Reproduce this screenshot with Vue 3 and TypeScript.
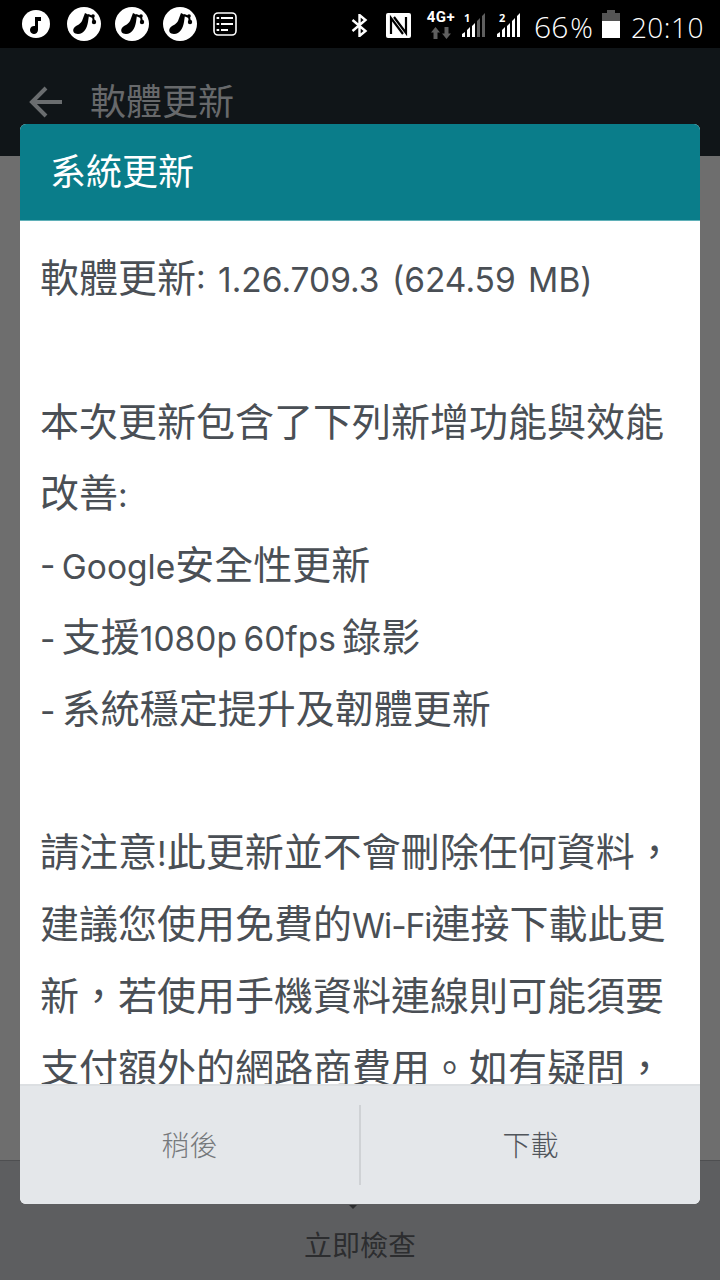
<template>
  <div class="screen">
    <div class="status-bar">
      <div class="notif-icons">
        <svg class="ic-music" width="28" height="28" viewBox="0 0 28 28">
          <circle cx="14" cy="14" r="14" fill="#fff" />
          <path d="M13 7h6v4h-3v9a4 4 0 1 1-3-3.9z" fill="#000" />
        </svg>
        <svg v-for="n in 3" :key="n" class="ic-app" width="34" height="34" viewBox="0 0 34 34">
          <circle cx="17" cy="17" r="17" fill="#fff" />
          <path d="M18 6l4 2-1 7c-1 6-4 12-10 12-4 0-6-3-4-6 2-3 6-3 8-7z" fill="#000" />
          <path d="M21 8l5 2 1 5" fill="none" stroke="#000" stroke-width="2" />
          <circle cx="26" cy="9" r="1.8" fill="#000" />
          <circle cx="27" cy="15" r="2.2" fill="#000" />
        </svg>
        <svg class="ic-list" width="24" height="24" viewBox="0 0 24 24">
          <rect x="1" y="1" width="22" height="22" rx="4" fill="none" stroke="#fff" stroke-width="1.6" />
          <path d="M3.6 6h2.6M8 6h12M3.6 12h2.6M8 12h12M3.6 18h2.6M8 18h7" stroke="#fff" stroke-width="2.2" />
        </svg>
      </div>
      <div class="sys-icons">
        <svg class="ic-bt" width="17" height="23" viewBox="0 0 17 23">
          <path d="M1.5 6l13 11-6 5V1l6 5-13 11" fill="none" stroke="#fff" stroke-width="2.4" />
        </svg>
        <svg class="ic-nfc" width="25" height="25" viewBox="0 0 25 25">
          <path d="M2 0h21a2 2 0 0 1 2 2v21a2 2 0 0 1-2 2H2a2 2 0 0 1-2-2V2a2 2 0 0 1 2-2z" fill="#fff" />
          <path d="M5 21V5l12 16M20 4v16L8 4" fill="none" stroke="#000" stroke-width="2.2" />
        </svg>
        <div class="net">
          <span class="net-label">4G+</span>
          <svg width="20" height="12" viewBox="0 0 20 12">
            <path d="M4.5 0l4.500 5.500H6.500V12h-4V5.500H0zM15.500 12L11 6.500h2.500V0h4v6.500H20z" fill="#5f5f5f" />
          </svg>
        </div>
        <div class="signal">
          <span class="sim">1</span>
          <svg width="24" height="24" viewBox="0 0 24 24">
            <path d="M0 21l3-2v5H0zM5 17l3-3v10H5zM10 13l3-3v14h-3z" fill="#fff" />
            <path d="M15 8l3-3v19h-3zM20 3l3-3v24h-3z" fill="#5f5f5f" />
          </svg>
        </div>
        <div class="signal two">
          <span class="sim">2</span>
          <svg width="24" height="24" viewBox="0 0 24 24">
            <path d="M0 21l3-2v5H0zM5 17l3-3v10H5zM10 13l3-3v14h-3zM15 8l3-3v19h-3zM20 3l3-3v24h-3z" fill="#fff" />
          </svg>
        </div>
        <span class="pct">66<span class="pct-sign">%</span></span>
        <svg class="ic-batt" width="18" height="28" viewBox="0 0 18 28">
          <path d="M5 0h8v3h5v25H0V3h5z" fill="#555" />
          <path d="M0 11h18v17H0z" fill="#fff" />
        </svg>
        <span class="clock">20:10</span>
      </div>
    </div>

    <div class="action-bar">
      <svg class="back" width="34" height="32" viewBox="0 0 34 32">
        <path d="M33 16H4M17 2L3 16l14 14" fill="none" stroke="#6a6d6f" stroke-width="4" />
      </svg>
      <span class="page-title">軟體更新</span>
    </div>

    <div class="page-body">
      <div class="check-row">
        <i class="chevron"></i>
        <span class="check-label">立即檢查</span>
      </div>
    </div>

    <div class="dialog">
      <div class="dialog-header">系統更新</div>
      <div class="dialog-body">
        <p v-for="(line, i) in lines" :key="i" class="line">
          <span
            v-for="(part, j) in split(line)"
            :key="j"
            :class="{ latin: isLatin(part), tight: part === 'Wi-Fi' }"
          >{{ part }}</span>
        </p>
      </div>
      <div class="dialog-actions">
        <button class="btn later">稍後</button>
        <button class="btn">下載</button>
      </div>
    </div>
  </div>
</template>

<script setup lang="ts">
const lines: string[] = [
  '軟體更新: 1.26.709.3 (624.59 MB)',
  '\u00a0',
  '本次更新包含了下列新增功能與效能改善:',
  '- Google安全性更新',
  '- 支援1080p 60fps 錄影',
  '- 系統穩定提升及韌體更新',
  '\u00a0',
  '請注意!此更新並不會刪除任何資料\uff0c建議您使用免費的Wi-Fi連接下載此更新\uff0c若使用手機資料連線則可能須要支付額外的網路商費用\u3002如有疑問\uff0c',
]

// latin runs are set smaller than the CJK text
const split = (s: string) => s.split(/([\x00-\x7f\u00a0]+)/).filter(Boolean)
const isLatin = (s: string) => /^[\x00-\x7f\u00a0]+$/.test(s)
</script>

<style>
html,
body {
  margin: 0;
  background: #000;
}
</style>

<style scoped>
.screen {
  position: relative;
  width: 720px;
  height: 1280px;
  overflow: hidden;
  display: flex;
  flex-direction: column;
  background: #6e6e6e;
  font-family: "Open Sans", "Noto Sans CJK TC", sans-serif;
}
.status-bar {
  height: 48px;
  background: #000;
  display: flex;
  align-items: center;
  justify-content: space-between;
  padding: 0 16px 0 22px;
  color: #fff;
}
.notif-icons {
  display: flex;
  align-items: center;
  gap: 14px;
}
.ic-music {
  margin-right: 3px;
}
.ic-list {
  margin-left: 2px;
}
.sys-icons {
  display: flex;
  align-items: center;
}
.ic-bt {
  margin-top: 3px;
}
.ic-nfc {
  margin-left: 18px;
  margin-top: 3px;
}
.net {
  display: flex;
  flex-direction: column;
  align-items: center;
  margin-left: 16px;
  margin-top: 3px;
  gap: 4px;
}
.net-label {
  font-family: "Roboto", sans-serif;
  font-size: 15px;
  line-height: 11px;
  font-weight: 700;
  letter-spacing: 0.4px;
}
.signal {
  position: relative;
  width: 24px;
  height: 24px;
  margin-left: 7px;
  margin-top: 2px;
}
.signal.two {
  margin-left: 11px;
}
.signal svg {
  display: block;
}
.sim {
  position: absolute;
  left: 2px;
  top: 0;
  font-size: 11px;
  line-height: 9px;
  font-weight: 700;
}
.pct {
  font-size: 30px;
  font-weight: 300;
  line-height: 32px;
  margin: 6px 0 0 13px;
}
.pct-sign {
  font-size: 28px;
  margin-left: 2px;
}
.ic-batt {
  margin-left: 9px;
}
.clock {
  font-size: 28px;
  font-weight: 300;
  line-height: 32px;
  margin: 6px 0 0 11px;
  letter-spacing: 0.5px;
}
.action-bar {
  height: 108px;
  background: #101518;
  display: flex;
  align-items: flex-start;
  padding: 38px 0 0 29px;
  box-sizing: border-box;
}
.page-title {
  margin-left: 27px;
  margin-top: -6px;
  font-size: 36px;
  line-height: 44px;
  color: #67696b;
}
.page-body {
  flex: 1;
  display: flex;
  flex-direction: column;
  justify-content: flex-end;
}
.check-row {
  height: 120px;
  background: #5d5e60;
  border-top: 1px solid #4e4f51;
  display: flex;
  flex-direction: column;
  align-items: center;
  padding-top: 44px;
  box-sizing: border-box;
}
.chevron {
  width: 0;
  height: 0;
  border-left: 4px solid transparent;
  border-right: 4px solid transparent;
  border-top: 4px solid #2c2d2f;
  margin-bottom: 16px;
  margin-left: -14px;
}
.check-label {
  font-size: 28px;
  line-height: 40px;
  color: #2c2d2f;
}
.dialog {
  position: absolute;
  left: 20px;
  top: 124px;
  width: 680px;
  height: 1080px;
  border-radius: 6px;
  overflow: hidden;
  display: flex;
  flex-direction: column;
  background: #fff;
}
.dialog-header {
  height: 97px;
  flex: none;
  box-sizing: border-box;
  background: #0a7d8a;
  border-bottom: 1px solid #5fb0b8;
  color: #fff;
  font-size: 36px;
  line-height: 96px;
  padding-left: 30px;
}
.dialog-body {
  flex: 1;
  min-height: 0;
  overflow: hidden;
  padding: 20px 16px 0 20px;
  color: #4a4f55;
  font-size: 39px;
}
.line {
  margin: 0;
  line-height: 71.8px;
}
.latin {
  font-family: "Inter", "Open Sans", sans-serif;
  font-size: 33.5px;
  font-weight: 400;
  line-height: 1;
  word-spacing: -3px;
}
.line:first-child .latin {
  word-spacing: 3px;
}
.latin.tight {
  letter-spacing: -1px;
}
.dialog-actions {
  height: 120px;
  flex: none;
  box-sizing: border-box;
  background: #e4e7ea;
  border-top: 2px solid #dcdfe2;
  display: flex;
  align-items: center;
}
.btn {
  flex: 1;
  height: 80px;
  border: 0;
  background: none;
  padding: 0 0 3px;
  font-family: inherit;
  font-size: 28px;
  font-weight: 300;
  color: #50555b;
}
.btn.later {
  color: #76797c;
  border-right: 2px solid #cfd2d5;
}
</style>
